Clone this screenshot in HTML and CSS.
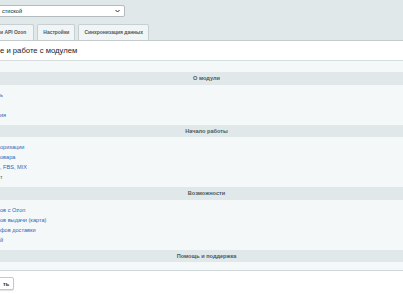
FILE: index.html
```html
<!DOCTYPE html>
<html lang="ru">
<head>
  <meta charset="UTF-8">
  <title>Модуль Ozon</title>
  <link rel="stylesheet" href="styles.css">
</head>
<body>

  <div class="toolbar">
    <div class="site-select">
      <span>стиской</span>
      <svg class="chevron" width="5" height="4" viewBox="0 0 5 4"><path d="M0.5 1 L2.5 3 L4.5 1" fill="none" stroke="#333" stroke-width="1"/></svg>
    </div>
  </div>

  <div class="tabs">
    <div class="tab tab-first">и API Ozon</div>
    <div class="tab">Настройки</div>
    <div class="tab">Синхронизация данных</div>
  </div>

  <div class="panel">
    <h1 class="panel-title">е и работе с модулем</h1>

    <div class="sections">
      <div class="section-head">О модули</div>
      <div class="section-body">
        <a class="row" href="#">ь</a>
        <span class="row"></span>
        <a class="row" href="#">ия</a>
      </div>

      <div class="section-head">Начало работы</div>
      <div class="section-body">
        <a class="row" href="#">оризации</a>
        <a class="row" href="#">овара</a>
        <a class="row" href="#">, FBS, MIX</a>
        <span class="row plain">т</span>
      </div>

      <div class="section-head">Возможности</div>
      <div class="section-body">
        <a class="row" href="#">ов с Ozon</a>
        <a class="row" href="#">ов выдачи (карта)</a>
        <a class="row" href="#">фов доставки</a>
        <a class="row" href="#">й</a>
      </div>

      <div class="section-head">Помощь и поддержка</div>
      <div class="section-body empty"></div>
    </div>
  </div>

  <div class="buttons">
    <button class="btn" type="button">ть</button>
  </div>

</body>
</html>
```

FILE: styles.css
```css
body {
  margin: 0;
  background-color: #e0e8ea;
  font-family: 'Liberation Sans', Arial, sans-serif;
  color: #3f4b54;
  overflow: hidden;
}

.toolbar {
  padding-top: 5px;
  height: 13px;
}

.site-select {
  width: 122px;
  height: 10px;
  margin-left: -2px;
  padding-left: 3px;
  background-color: #fff;
  border: 1px solid #b3bbbe;
  border-radius: 2px;
  display: flex;
  align-items: center;
  justify-content: space-between;
  font-size: 5.6px;
  color: #222;
}

.chevron {
  margin-right: 4px;
}

.tabs {
  display: flex;
  gap: 3px;
  margin-top: 5px;
  height: 17px;
  align-items: flex-end;
}

.tab {
  height: 16px;
  line-height: 16px;
  padding: 0 5px;
  background-color: #f1f5f5;
  border: 1px solid #c6cfd1;
  border-bottom: none;
  border-radius: 2px 2px 0 0;
  font-size: 4.95px;
  font-weight: bold;
  color: #4b5a5e;
  box-sizing: border-box;
}

.tab-first {
  margin-left: -6px;
  padding-right: 7px;
}

.panel {
  background-color: #fff;
  border-top: 1px solid #c3cbcd;
}

.panel-title {
  margin: 0;
  height: 19px;
  line-height: 20px;
  font-size: 7.7px;
  font-weight: normal;
  color: #222;
  border-bottom: 1px solid #d5dcde;
}

.sections {
  background-color: #f5f8f9;
  padding-top: 11px;
  border-bottom: 1px solid #d0d7d9;
  box-shadow: 0 1px 1px rgba(0, 0, 0, 0.06);
}

.section-head {
  height: 12.5px;
  line-height: 12.5px;
  background-color: #e0e8ea;
  text-align: center;
  padding-left: 10px;
  font-size: 5.6px;
  font-weight: bold;
  color: #4b5a5e;
}

.section-body {
  padding: 5px 0;
  display: flex;
  flex-direction: column;
}

.section-body.empty {
  padding: 4px 0;
}

.row {
  height: 10px;
  line-height: 10px;
  font-size: 5.6px;
  color: #2b6ab8;
  text-decoration: none;
}

.row.plain {
  color: #3f4b54;
}

.buttons {
  display: flex;
  align-items: flex-start;
  background-color: #fff;
  padding-top: 6px;
  height: 20px;
}

.btn {
  margin-left: -12px;
  height: 13px;
  padding: 0 4px 0 14px;
  background-color: #fff;
  border: 1px solid #c2cacc;
  border-radius: 2px;
  box-shadow: 0 1px 1px rgba(0, 0, 0, 0.12);
  font-family: 'Liberation Sans', Arial, sans-serif;
  font-size: 5.6px;
  font-weight: bold;
  color: #333;
}
```
